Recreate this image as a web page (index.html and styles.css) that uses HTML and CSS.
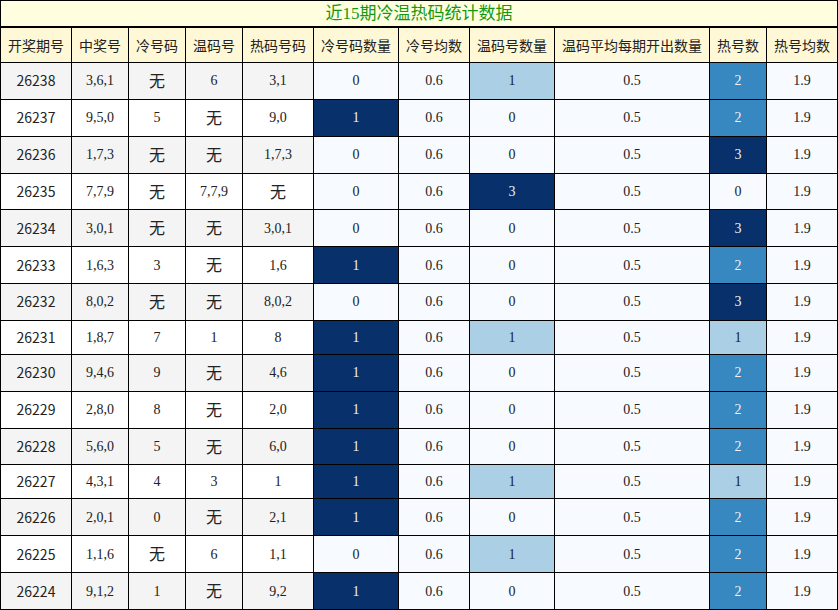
FILE: index.html
```html
<!DOCTYPE html>
<html lang="zh">
<head>
<meta charset="utf-8">
<title>近15期冷温热码统计数据</title>
<link rel="stylesheet" href="styles.css">
</head>
<body>
<table class="stats">
  <colgroup>
    <col class="w71"><col class="w57"><col class="w57"><col class="w57"><col class="w71">
    <col class="w85"><col class="w71"><col class="w85"><col class="w155"><col class="w57"><col class="w71">
  </colgroup>
  <thead>
    <tr class="title-row"><th colspan="11">近15期冷温热码统计数据</th></tr>
    <tr class="head-row">
      <th>开奖期号</th><th>中奖号</th><th>冷号码</th><th>温码号</th><th>热码号码</th><th>冷号码数量</th><th>冷号均数</th><th>温码号数量</th><th>温码平均每期开出数量</th><th>热号数</th><th>热号均数</th>
    </tr>
  </thead>
  <tbody>
    <tr class="odd"><td class="id">26238</td><td>3,6,1</td><td class="none">无</td><td>6</td><td>3,1</td><td class="b0">0</td><td class="b0">0.6</td><td class="b1">1</td><td class="b0">0.5</td><td class="b2">2</td><td class="b0">1.9</td></tr>
    <tr><td class="id">26237</td><td>9,5,0</td><td>5</td><td class="none">无</td><td>9,0</td><td class="b3">1</td><td class="b0">0.6</td><td class="b0">0</td><td class="b0">0.5</td><td class="b2">2</td><td class="b0">1.9</td></tr>
    <tr class="odd"><td class="id">26236</td><td>1,7,3</td><td class="none">无</td><td class="none">无</td><td>1,7,3</td><td class="b0">0</td><td class="b0">0.6</td><td class="b0">0</td><td class="b0">0.5</td><td class="b3">3</td><td class="b0">1.9</td></tr>
    <tr><td class="id">26235</td><td>7,7,9</td><td class="none">无</td><td>7,7,9</td><td class="none">无</td><td class="b0">0</td><td class="b0">0.6</td><td class="b3">3</td><td class="b0">0.5</td><td class="b0">0</td><td class="b0">1.9</td></tr>
    <tr class="odd"><td class="id">26234</td><td>3,0,1</td><td class="none">无</td><td class="none">无</td><td>3,0,1</td><td class="b0">0</td><td class="b0">0.6</td><td class="b0">0</td><td class="b0">0.5</td><td class="b3">3</td><td class="b0">1.9</td></tr>
    <tr><td class="id">26233</td><td>1,6,3</td><td>3</td><td class="none">无</td><td>1,6</td><td class="b3">1</td><td class="b0">0.6</td><td class="b0">0</td><td class="b0">0.5</td><td class="b2">2</td><td class="b0">1.9</td></tr>
    <tr class="odd"><td class="id">26232</td><td>8,0,2</td><td class="none">无</td><td class="none">无</td><td>8,0,2</td><td class="b0">0</td><td class="b0">0.6</td><td class="b0">0</td><td class="b0">0.5</td><td class="b3">3</td><td class="b0">1.9</td></tr>
    <tr><td class="id">26231</td><td>1,8,7</td><td>7</td><td>1</td><td>8</td><td class="b3">1</td><td class="b0">0.6</td><td class="b1">1</td><td class="b0">0.5</td><td class="b1">1</td><td class="b0">1.9</td></tr>
    <tr class="odd"><td class="id">26230</td><td>9,4,6</td><td>9</td><td class="none">无</td><td>4,6</td><td class="b3">1</td><td class="b0">0.6</td><td class="b0">0</td><td class="b0">0.5</td><td class="b2">2</td><td class="b0">1.9</td></tr>
    <tr><td class="id">26229</td><td>2,8,0</td><td>8</td><td class="none">无</td><td>2,0</td><td class="b3">1</td><td class="b0">0.6</td><td class="b0">0</td><td class="b0">0.5</td><td class="b2">2</td><td class="b0">1.9</td></tr>
    <tr class="odd"><td class="id">26228</td><td>5,6,0</td><td>5</td><td class="none">无</td><td>6,0</td><td class="b3">1</td><td class="b0">0.6</td><td class="b0">0</td><td class="b0">0.5</td><td class="b2">2</td><td class="b0">1.9</td></tr>
    <tr><td class="id">26227</td><td>4,3,1</td><td>4</td><td>3</td><td>1</td><td class="b3">1</td><td class="b0">0.6</td><td class="b1">1</td><td class="b0">0.5</td><td class="b1">1</td><td class="b0">1.9</td></tr>
    <tr class="odd"><td class="id">26226</td><td>2,0,1</td><td>0</td><td class="none">无</td><td>2,1</td><td class="b3">1</td><td class="b0">0.6</td><td class="b0">0</td><td class="b0">0.5</td><td class="b2">2</td><td class="b0">1.9</td></tr>
    <tr><td class="id">26225</td><td>1,1,6</td><td class="none">无</td><td>6</td><td>1,1</td><td class="b0">0</td><td class="b0">0.6</td><td class="b1">1</td><td class="b0">0.5</td><td class="b2">2</td><td class="b0">1.9</td></tr>
    <tr class="odd"><td class="id">26224</td><td>9,1,2</td><td>1</td><td class="none">无</td><td>9,2</td><td class="b3">1</td><td class="b0">0.6</td><td class="b0">0</td><td class="b0">0.5</td><td class="b2">2</td><td class="b0">1.9</td></tr>
  </tbody>
</table>
</body>
</html>
```
FILE: styles.css
```css
html, body {
  margin: 0;
  padding: 0;
  background: #ffffff;
}

.stats {
  border-collapse: collapse;
  table-layout: fixed;
  width: 838px;
  font-family: "Liberation Serif", "Noto Sans CJK SC", serif;
  font-size: 14px;
  color: #222222;
}

.w57 { width: 57px; }
.w71 { width: 71px; }
.w85 { width: 85px; }
.w155 { width: 155px; }

.stats th,
.stats td {
  border: 1px solid #000000;
  text-align: center;
  vertical-align: middle;
  padding: 0;
  white-space: nowrap;
}

.title-row th {
  background: #ffffe0;
  color: #119911;
  font-size: 17px;
  font-weight: normal;
  line-height: 25px;
  border-bottom: 2px solid #000000;
}

.head-row th {
  background: #fff8d6;
  font-family: "Noto Sans CJK SC", sans-serif;
  font-weight: normal;
  font-size: 14px;
  line-height: 20px;
  padding: 7px 0;
  color: #222222;
}

.stats td {
  line-height: 17px;
  padding: 8px 0;
  background: #ffffff;
}

.stats tr.odd td {
  background: #f4f4f4;
}

.stats td.id {
  font-family: "Noto Sans CJK SC", sans-serif;
}

.stats td.none {
  font-family: "Noto Sans CJK SC", sans-serif;
  font-size: 16px;
  line-height: 19.85px;
}

.stats td.b0, .stats tr.odd td.b0 { background: #f7fbff; color: #222222; }
.stats td.b1, .stats tr.odd td.b1 { background: #abd0e6; color: #222222; }
.stats td.b2, .stats tr.odd td.b2 { background: #3787c0; color: #f1f1f1; }
.stats td.b3, .stats tr.odd td.b3 { background: #08306b; color: #f1f1f1; }
```
